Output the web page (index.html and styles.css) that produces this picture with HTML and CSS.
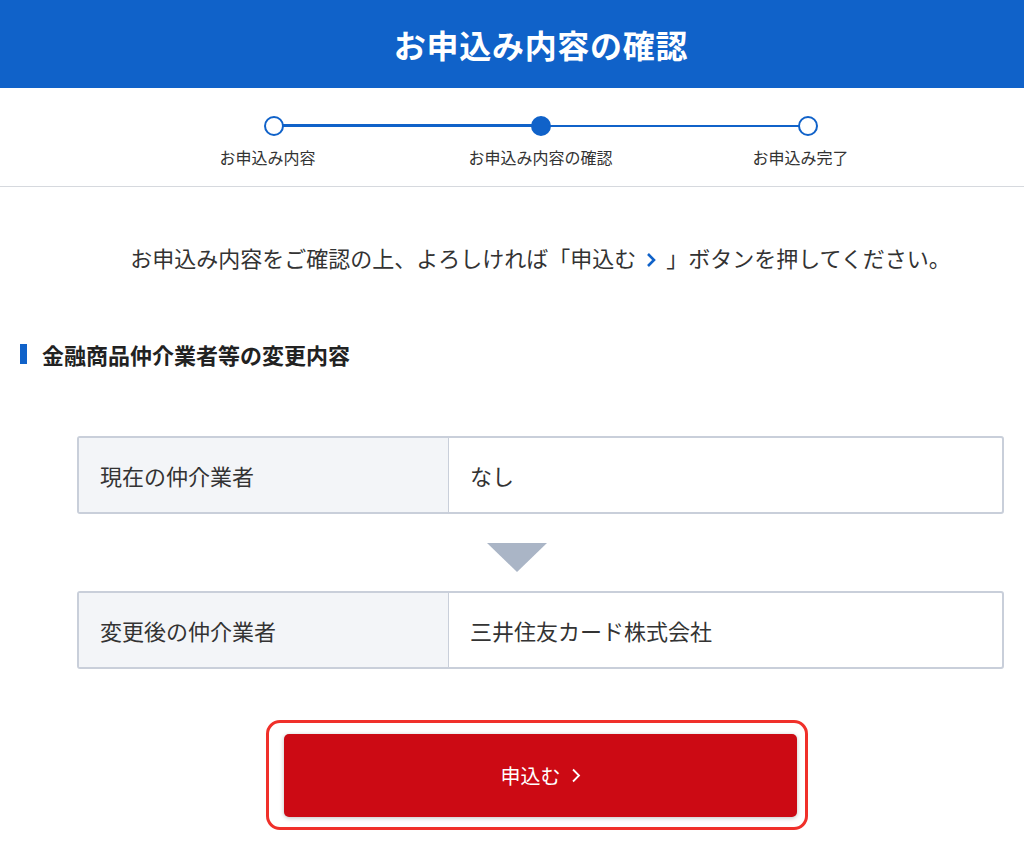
FILE: index.html
```html
<!DOCTYPE html>
<html lang="ja">
<head>
  <meta charset="UTF-8" />
  <meta name="viewport" content="width=device-width, initial-scale=1.0" />
  <title>お申込み内容の確認</title>
  <link rel="stylesheet" href="styles.css">
</head>
<body>
  <header class="page-head">
    <h1>お申込み内容の確認</h1>
  </header>

  <div class="stepper">
    <ol class="steps">
      <li class="step done"><span class="dot"></span><span class="step-label">お申込み内容</span></li>
      <li class="step current"><span class="dot"></span><span class="step-label">お申込み内容の確認</span></li>
      <li class="step"><span class="dot"></span><span class="step-label">お申込み完了</span></li>
    </ol>
  </div>

  <main class="main">
    <p class="lead">お申込み内容をご確認の上、よろしければ「申込む<svg class="chev" viewBox="0 0 10 16" width="10" height="16"><path d="M2 2l6 6-6 6" fill="none" stroke="#1062c9" stroke-width="2.6"/></svg>」ボタンを押してください。</p>

    <h2 class="section-title">金融商品仲介業者等の変更内容</h2>

    <div class="content">
      <table class="info">
        <tr>
          <th>現在の仲介業者</th>
          <td>なし</td>
        </tr>
      </table>

      <div class="arrow-row"><span class="arrow"></span></div>

      <table class="info">
        <tr>
          <th>変更後の仲介業者</th>
          <td>三井住友カード株式会社</td>
        </tr>
      </table>

      <div class="submit-wrap">
        <button type="button" class="btn-submit">申込む<svg class="btn-chev" viewBox="0 0 10 16" width="10" height="17"><path d="M2 2l6 6-6 6" fill="none" stroke="#fff" stroke-width="1.8"/></svg></button>
      </div>
    </div>
  </main>
</body>
</html>
```

FILE: styles.css
```css
body {
  margin: 0;
  background: #fff;
  color: #333;
  font-family: "Noto Sans CJK JP", "Noto Sans", sans-serif;
}
.page-head {
  background-color: #1062c9;
  height: 88px;
  display: flex;
  align-items: center;
  justify-content: center;
  padding-left: 58px;
}
.page-head h1 {
  margin: 0;
  color: #fff;
  font-size: 32px;
  font-weight: 700;
  letter-spacing: 0.7px;
}
.stepper {
  height: 98px;
  border-bottom: 1.5px solid #d6d9de;
}
.steps {
  list-style: none;
  margin: 0 0 0 140px;
  padding: 0;
  width: 801px;
  display: grid;
  grid-template-columns: repeat(3, 1fr);
}
.step {
  position: relative;
  display: flex;
  flex-direction: column;
  align-items: center;
  padding-top: 28px;
}
.step::after {
  content: "";
  position: absolute;
  left: 50%;
  top: 37px;
  width: 100%;
  height: 2px;
  background: #1062c9;
}
.step:last-child::after { display: none; }
.step.done::after { height: 3px; top: 36px; }
.dot {
  position: relative;
  z-index: 1;
  width: 16px;
  height: 16px;
  border: 2.5px solid #1062c9;
  border-radius: 50%;
  background: #fff;
}
.step.current .dot { background: #1062c9; }
.step-label {
  margin-top: 9px;
  font-size: 16px;
  color: #333;
}
.step.done .step-label { margin-left: -12px; }
.step:last-child .step-label { margin-left: -14px; }
.main {
  padding: 0 20px;
}
.lead {
  margin: 54px 0 0 57px;
  text-align: center;
  font-size: 22px;
  line-height: 33px;
}
.chev {
  margin: 0 10px 0 10px;
  vertical-align: -1px;
}
.section-title {
  margin: 70px 0 0;
  border-left: 7px solid #1062c9;
  padding-left: 15px;
  font-size: 22px;
  line-height: 20px;
  font-weight: 700;
  color: #222;
}
.content {
  margin: 72px 0 0 57px;
}
.info {
  width: 100%;
  border-collapse: separate;
  border-spacing: 0;
  border: 2px solid #c9cfda;
  border-radius: 3px;
}
.info th, .info td {
  height: 74px;
  padding: 0 0 0 21px;
  font-size: 22px;
  font-weight: 400;
  text-align: left;
  color: #333;
}
.info th {
  width: 348px;
  background: #f3f5f8;
  border-right: 1.5px solid #c9cfda;
}
.arrow-row {
  display: flex;
  justify-content: center;
  padding: 29px 48px 19px 0;
}
.arrow {
  width: 0;
  height: 0;
  border-left: 30px solid transparent;
  border-right: 30px solid transparent;
  border-top: 29px solid #aab5c6;
}
.submit-wrap {
  margin: 51px 0 0 189px;
  width: 513px;
  padding: 11px 8px 10px 15px;
  border: 3px solid #f0302a;
  border-radius: 14px;
}
.btn-submit {
  display: flex;
  align-items: center;
  justify-content: center;
  width: 513px;
  height: 83px;
  border: none;
  border-radius: 5px;
  background: #cc0a14;
  color: #fff;
  font-family: inherit;
  font-size: 20px;
  box-shadow: 0 1px 4px rgba(0, 0, 0, 0.25);
  cursor: pointer;
}
.btn-chev {
  margin-left: 10px;
}
```
